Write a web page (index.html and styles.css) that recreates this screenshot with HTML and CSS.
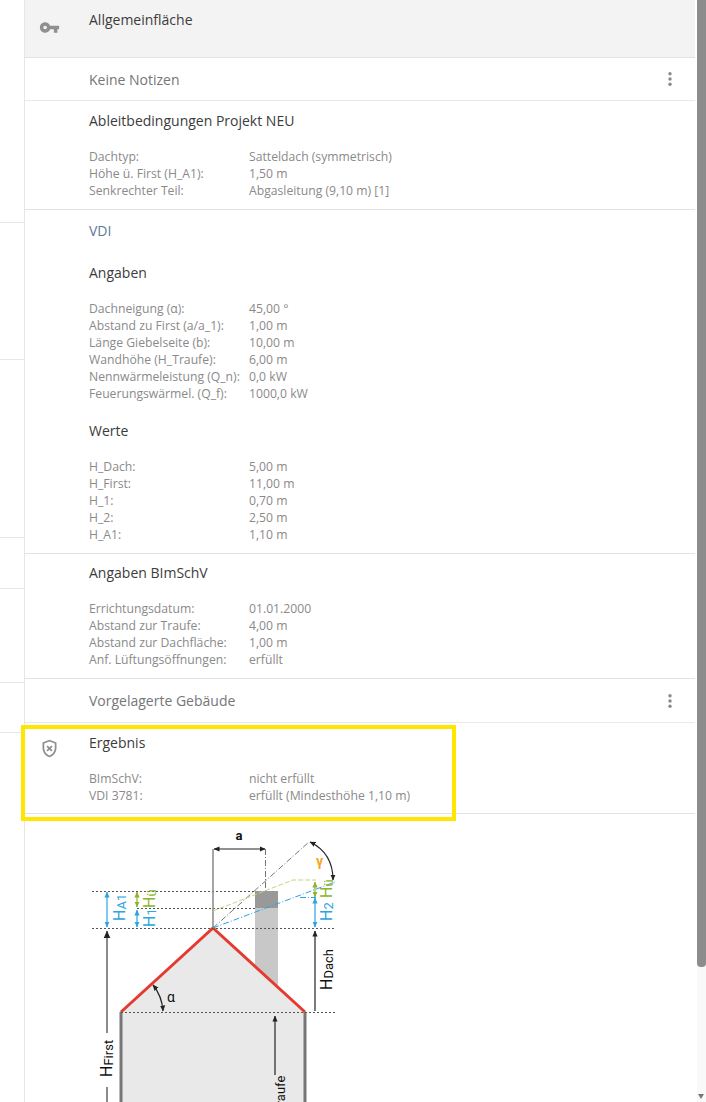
FILE: index.html
```html
<!DOCTYPE html>
<html>

<head>
    <meta charset="utf-8">
    <link rel="stylesheet" href="styles.css">
</head>

<body>
    <div id="page">
        <div id="sidebar">
            <div class="side-item side-a"></div>
            <div class="side-item side-b"></div>
            <div class="side-item side-c"></div>
            <div class="side-item side-d"></div>
            <div class="side-item side-e"></div>
            <div class="side-item side-f"></div>
        </div>

        <div id="main">
            <div class="section section-head">
                <svg class="row-icon key-icon" viewBox="0 0 24 24">
                    <path d="M12.65 10C11.83 7.67 9.61 6 7 6c-3.31 0-6 2.69-6 6s2.69 6 6 6c2.61 0 4.83-1.67 5.65-4H17v4h4v-4h2v-4H12.65zM7 14c-1.1 0-2-.9-2-2s.9-2 2-2 2 .9 2 2-.9 2-2 2z" />
                </svg>
                <h2 class="title">Allgemeinfläche</h2>
            </div>

            <div class="section-bar">
                <span class="bar-text">Keine Notizen</span>
                <svg class="more-icon" viewBox="0 0 4 14">
                    <circle cx="2" cy="1.8" r="1.7" />
                    <circle cx="2" cy="7" r="1.7" />
                    <circle cx="2" cy="12.2" r="1.7" />
                </svg>
            </div>

            <div class="section">
                <h2 class="title">Ableitbedingungen Projekt NEU</h2>
                <dl class="rows">
                    <dt>Dachtyp:</dt>
                    <dd>Satteldach (symmetrisch)</dd>
                    <dt>Höhe ü. First (H_A1):</dt>
                    <dd>1,50 m</dd>
                    <dt>Senkrechter Teil:</dt>
                    <dd>Abgasleitung (9,10 m) [1]</dd>
                </dl>
            </div>

            <div class="section">
                <h2 class="title title-link">VDI</h2>
                <h2 class="title title-sub">Angaben</h2>
                <dl class="rows">
                    <dt>Dachneigung (α):</dt>
                    <dd>45,00 °</dd>
                    <dt>Abstand zu First (a/a_1):</dt>
                    <dd>1,00 m</dd>
                    <dt>Länge Giebelseite (b):</dt>
                    <dd>10,00 m</dd>
                    <dt>Wandhöhe (H_Traufe):</dt>
                    <dd>6,00 m</dd>
                    <dt>Nennwärmeleistung (Q_n):</dt>
                    <dd>0,0 kW</dd>
                    <dt>Feuerungswärmel. (Q_f):</dt>
                    <dd>1000,0 kW</dd>
                </dl>
                <h2 class="title title-values">Werte</h2>
                <dl class="rows">
                    <dt>H_Dach:</dt>
                    <dd>5,00 m</dd>
                    <dt>H_First:</dt>
                    <dd>11,00 m</dd>
                    <dt>H_1:</dt>
                    <dd>0,70 m</dd>
                    <dt>H_2:</dt>
                    <dd>2,50 m</dd>
                    <dt>H_A1:</dt>
                    <dd>1,10 m</dd>
                </dl>
            </div>

            <div class="section section-bimschv">
                <h2 class="title">Angaben BImSchV</h2>
                <dl class="rows">
                    <dt>Errichtungsdatum:</dt>
                    <dd>01.01.2000</dd>
                    <dt>Abstand zur Traufe:</dt>
                    <dd>4,00 m</dd>
                    <dt>Abstand zur Dachfläche:</dt>
                    <dd>1,00 m</dd>
                    <dt>Anf. Lüftungsöffnungen:</dt>
                    <dd>erfüllt</dd>
                </dl>
            </div>

            <div class="section-bar section-bar-tall">
                <span class="bar-text">Vorgelagerte Gebäude</span>
                <svg class="more-icon" viewBox="0 0 4 14">
                    <circle cx="2" cy="1.8" r="1.7" />
                    <circle cx="2" cy="7" r="1.7" />
                    <circle cx="2" cy="12.2" r="1.7" />
                </svg>
            </div>

            <div class="section section-result">
                <svg class="row-icon shield-icon" viewBox="0 0 24 24">
                    <path d="M12 2 4 5v6.09c0 5.05 3.41 9.76 8 10.91 4.59-1.15 8-5.86 8-10.91V5l-8-3zm6 9.09c0 4-2.55 7.7-6 8.83-3.45-1.13-6-4.82-6-8.83v-4.7l6-2.25 6 2.25v4.7zM9.91 8.5 8.5 9.91 10.59 12 8.5 14.09l1.41 1.41L12 13.42l2.09 2.08 1.41-1.41L13.42 12l2.08-2.09-1.41-1.41L12 10.59 9.91 8.5z" />
                </svg>
                <h2 class="title">Ergebnis</h2>
                <dl class="rows">
                    <dt>BImSchV:</dt>
                    <dd>nicht erfüllt</dd>
                    <dt>VDI 3781:</dt>
                    <dd>erfüllt (Mindesthöhe 1,10 m)</dd>
                </dl>
                <div class="highlight"></div>
            </div>

            <!-- viewBox uses page coordinates, easier to compare with the drawing -->
            <svg class="diagram" viewBox="25 814 340 288" width="340" height="288">
                <defs>
                    <marker id="tip-black" viewBox="0 0 6 6" refX="5.5" refY="3" markerWidth="5" markerHeight="5" orient="auto-start-reverse">
                        <path d="M0 0.4 6 3 0 5.6z" fill="#222" />
                    </marker>
                    <marker id="tip-blue" viewBox="0 0 6 6" refX="5.5" refY="3" markerWidth="5" markerHeight="5" orient="auto-start-reverse">
                        <path d="M0 0.4 6 3 0 5.6z" fill="#2aa5e0" />
                    </marker>
                    <marker id="tip-green" viewBox="0 0 6 6" refX="5.5" refY="3" markerWidth="5" markerHeight="5" orient="auto-start-reverse">
                        <path d="M0 0.4 6 3 0 5.6z" fill="#8db52a" />
                    </marker>
                </defs>

                <rect x="255" y="891" width="23" height="17" fill="#999" />
                <rect x="255" y="908" width="23" height="80" fill="#c8c8c8" />
                <path d="M121 1012 213 928 305 1012V1102H121z" fill="#e9e9e9" />
                <path d="M121 1012V1102M305 1012V1102" stroke="#777" stroke-width="3" fill="none" />
                <path d="M121 1012 213 928 305 1012" stroke="#e53a30" stroke-width="3" fill="none" />

                <g stroke="#555" stroke-width="1" stroke-dasharray="2 2" fill="none">
                    <path d="M92 891.5H255" />
                    <path d="M137 908.5H255" />
                    <path d="M92 928.5H336" />
                    <path d="M121 1012.5H336" />
                </g>

                <path d="M213 849V928" stroke="#888" stroke-width="1.5" fill="none" />
                <path d="M265.5 849V892M213 928 309 842" stroke="#777" stroke-width="1" stroke-dasharray="6 2 1 2" fill="none" />
                <path d="M213 911 293 880H316" stroke="#bcd77f" stroke-width="1" stroke-dasharray="5 2" fill="none" />
                <path d="M213 928 335 882M300 897.5H316" stroke="#2aa5e0" stroke-width="1" stroke-dasharray="6 2 1 2" fill="none" />

                <g stroke="#222" stroke-width="1.2" fill="none" marker-start="url(#tip-black)" marker-end="url(#tip-black)">
                    <path d="M214 849H265" />
                    <path d="M310 842Q333 853 333 880" />
                    <path d="M153 985Q162 996 163 1011" />
                </g>
                <path d="M315 1011V931" stroke="#222" stroke-width="1.2" marker-end="url(#tip-black)" />
                <path d="M275 1075V1016" stroke="#222" stroke-width="1.2" marker-end="url(#tip-black)" />
                <path d="M107 1102V1087M107 1033V931" stroke="#666" stroke-width="1.5" marker-end="url(#tip-black)" />

                <g stroke="#2aa5e0" stroke-width="1.2" marker-start="url(#tip-blue)" marker-end="url(#tip-blue)">
                    <path d="M107 892V927" />
                    <path d="M137 910V927" />
                    <path d="M315 898V927" />
                </g>
                <g stroke="#8db52a" stroke-width="1.2" marker-start="url(#tip-green)" marker-end="url(#tip-green)">
                    <path d="M137 892V907" />
                    <path d="M315 882V897" />
                </g>

                <text class="dia-label dia-a" x="239" y="840">a</text>
                <text class="dia-label dia-alpha" x="167" y="1002">α</text>
                <text class="dia-label dia-gamma" x="316" y="866">γ</text>

                <text class="dia-label dia-blue" transform="translate(125 921) rotate(-90)">H<tspan class="dia-small" dy="1">A1</tspan></text>
                <text class="dia-label dia-green" transform="translate(155 908) rotate(-90)">H<tspan class="dia-small" dy="1">ü</tspan></text>
                <text class="dia-label dia-blue" transform="translate(155 927) rotate(-90)">H<tspan class="dia-small" dy="1">1</tspan></text>
                <text class="dia-label dia-green" transform="translate(332 898) rotate(-90)">H<tspan class="dia-small" dy="1">ü</tspan></text>
                <text class="dia-label dia-blue" transform="translate(332 921) rotate(-90)">H<tspan class="dia-small" dy="1">2</tspan></text>
                <text class="dia-label" transform="translate(332 990) rotate(-90)">H<tspan class="dia-small" dy="1">Dach</tspan></text>
                <text class="dia-label" transform="translate(112 1077) rotate(-90)">H<tspan class="dia-small" dy="1">First</tspan></text>
                <text class="dia-label" transform="translate(284 1124) rotate(-90)">H<tspan class="dia-small" dy="1">Traufe</tspan></text>
            </svg>
        </div>

        <div id="scrollbar">
            <div class="scroll-thumb"></div>
            <div class="scroll-arrow"></div>
        </div>
    </div>
</body>

</html>
```

FILE: styles.css
```css
html,
body {
    margin: 0;
    height: 100%;
    overflow: hidden;
    background-color: #fff;
}

body {
    font-family: "Open Sans", Arial, sans-serif;
    color: #333;
}

#page {
    display: flex;
    height: 1102px;
    overflow: hidden;
}

#sidebar {
    width: 24px;
    flex-shrink: 0;
}

.side-item {
    border-bottom: 1px solid #e6e6e6;
}

.side-a {
    height: 222px;
}

.side-b {
    height: 136px;
}

.side-c {
    height: 177px;
}

.side-d {
    height: 50px;
}

.side-e {
    height: 93px;
}

.side-f {
    height: 49px;
}

#main {
    width: 670px;
    height: 1102px;
    flex-shrink: 0;
    border-left: 1px solid #e6e6e6;
}

.section {
    position: relative;
    padding: 10px 20px 10px 64px;
    border-bottom: 1px solid #e3e3e3;
}

.section-head {
    height: 37px;
    background-color: #f3f3f3;
}

.section-bimschv {
    padding-top: 9px;
}

.section-result {
    padding-bottom: 9px;
}

.section-bar {
    display: flex;
    align-items: center;
    justify-content: space-between;
    height: 42px;
    padding: 0 23px 0 64px;
    border-bottom: 1px solid #e9e9e9;
}

.section-bar-tall {
    height: 43px;
}

.bar-text {
    font-size: 14px;
    color: #767676;
}

.title {
    margin: 0;
    font-size: 14px;
    line-height: 20px;
    font-weight: 400;
    color: #3c3c3c;
}

.title-link {
    margin-top: 1px;
    color: #5b7a99;
}

.title-sub {
    margin-top: 22px;
}

.title-values {
    margin-top: 19px;
}

.rows {
    display: grid;
    grid-template-columns: 160px 1fr;
    margin: 17px 0 0;
    font-size: 12.2px;
    line-height: 17px;
    color: #8a8a8a;
}

.rows dt,
.rows dd {
    margin: 0;
}

.row-icon {
    position: absolute;
    left: 14px;
    fill: #8f8f8f;
}

.key-icon {
    top: 17px;
    width: 21px;
    height: 21px;
}

.shield-icon {
    top: 15px;
    left: 14px;
    width: 21px;
    height: 21px;
}

.more-icon {
    width: 4px;
    height: 14px;
    fill: #8a8a8a;
}

.highlight {
    position: absolute;
    left: -4px;
    top: 2px;
    width: 427px;
    height: 88px;
    border: 4px solid #ffe600;
}

.diagram {
    display: block;
    margin-top: 0;
}

.dia-label {
    font-family: Roboto, Arial, sans-serif;
    font-size: 16px;
    fill: #111;
}

.dia-small {
    font-size: 13px;
}

.dia-a {
    font-weight: 700;
    font-size: 13px;
    text-anchor: middle;
}

.dia-alpha {
    font-size: 14px;
}

.dia-gamma {
    font-size: 14px;
    font-weight: 700;
    fill: #f5a623;
}

.dia-blue {
    fill: #2aa5e0;
}

.dia-green {
    fill: #8db52a;
}

#scrollbar {
    position: relative;
    width: 9px;
    margin-left: 2px;
    background-color: #f9f9f9;
}

.scroll-thumb {
    height: 967px;
    background-color: #8c8c8c;
    border-radius: 0 0 4px 4px;
}

.scroll-arrow {
    position: absolute;
    left: 1px;
    bottom: 3px;
    border-left: 3.5px solid transparent;
    border-right: 3.5px solid transparent;
    border-top: 5px solid #777;
}
```
